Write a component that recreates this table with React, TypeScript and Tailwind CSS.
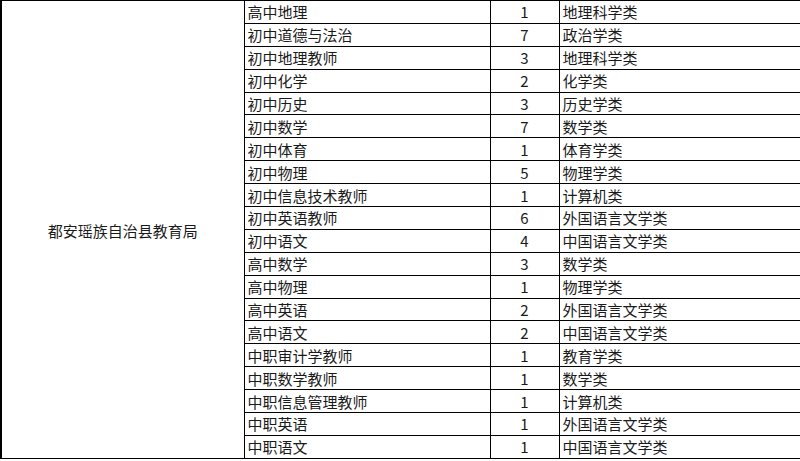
const rows: [string, string, string][] = [
  ["高中地理", "1", "地理科学类"],
  ["初中道德与法治", "7", "政治学类"],
  ["初中地理教师", "3", "地理科学类"],
  ["初中化学", "2", "化学类"],
  ["初中历史", "3", "历史学类"],
  ["初中数学", "7", "数学类"],
  ["初中体育", "1", "体育学类"],
  ["初中物理", "5", "物理学类"],
  ["初中信息技术教师", "1", "计算机类"],
  ["初中英语教师", "6", "外国语言文学类"],
  ["初中语文", "4", "中国语言文学类"],
  ["高中数学", "3", "数学类"],
  ["高中物理", "1", "物理学类"],
  ["高中英语", "2", "外国语言文学类"],
  ["高中语文", "2", "中国语言文学类"],
  ["中职审计学教师", "1", "教育学类"],
  ["中职数学教师", "1", "数学类"],
  ["中职信息管理教师", "1", "计算机类"],
  ["中职英语", "1", "外国语言文学类"],
  ["中职语文", "1", "中国语言文学类"],
];

export default function App() {
  return (
    <div className="w-[800px] h-[461px] bg-white overflow-hidden">
      <table
        className="w-[799px] border-collapse table-fixed text-[15px] text-[#1a1a1a] leading-none"
        style={{ fontFamily: '"Noto Sans CJK SC", "Microsoft YaHei", sans-serif' }}
      >
        <colgroup>
          <col className="w-[243px]" />
          <col className="w-[246px]" />
          <col className="w-[69px]" />
          <col className="w-[241px]" />
        </colgroup>
        <tbody>
          {rows.map(([job, num, major], i) => (
            <tr key={i} className="h-[22.9px]">
              {i === 0 && (
                <td
                  rowSpan={rows.length}
                  className="border border-black border-l-2 text-center align-middle pt-[3px]"
                >
                  都安瑶族自治县教育局
                </td>
              )}
              <td className="border border-black pl-[3px] p-0 whitespace-nowrap">{job}</td>
              <td className="border border-black text-center p-0">{num}</td>
              <td className="border border-black pl-[3px] p-0 whitespace-nowrap">{major}</td>
            </tr>
          ))}
        </tbody>
      </table>
    </div>
  );
}
